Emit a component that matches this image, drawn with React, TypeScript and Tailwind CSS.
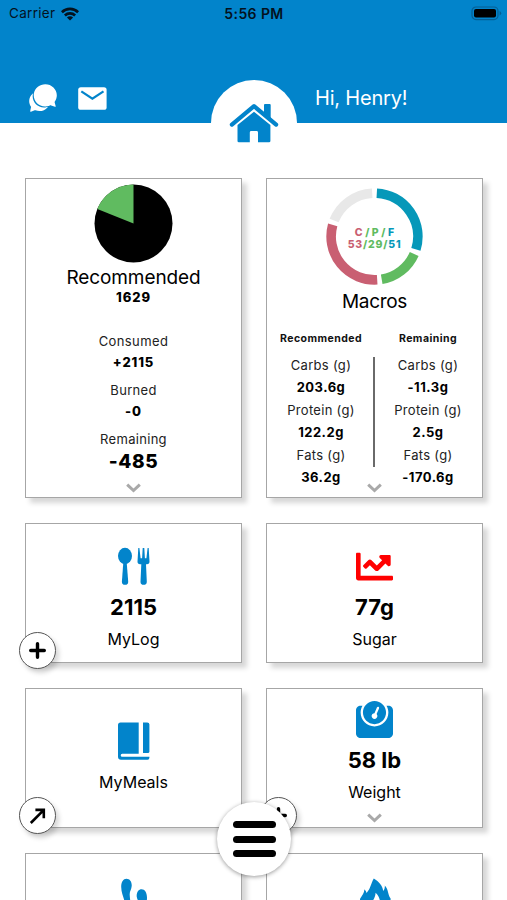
import type { ReactNode } from "react"
import { FaChartLine, FaWeight } from "react-icons/fa"
import { IoIosChatbubbles } from "react-icons/io"

const macroRows = [
  { label: "Carbs (g)", recommended: "203.6g", remaining: "-11.3g" },
  { label: "Protein (g)", recommended: "122.2g", remaining: "2.5g" },
  { label: "Fats (g)", recommended: "36.2g", remaining: "-170.6g" },
]

function WifiIcon() {
  return (
    <svg className="w-[18px] h-[14px]" viewBox="0 0 18 14" fill="none" stroke="#04121e" strokeWidth="2.7">
      <path d="M0.9 5.2A11.6 11.6 0 0 1 17.1 5.2" />
      <path d="M3.9 8.5A7.3 7.3 0 0 1 14.1 8.5" />
      <path d="M9 13.6L5.9 10.5A4.4 4.4 0 0 1 12.1 10.5Z" fill="#04121e" stroke="none" />
    </svg>
  )
}

function BatteryIcon() {
  return (
    <svg className="w-[31px] h-[15px]" viewBox="0 0 31 15">
      <rect x="1" y="1" width="26" height="12.6" rx="4" fill="none" stroke="#065f94" strokeWidth="1.2" />
      <rect x="3" y="3" width="22" height="8.6" rx="2" fill="#000" />
      <path d="M28.6 5v4.4q1.6-.8 1.6-2.2t-1.6-2.2z" fill="#065f94" />
    </svg>
  )
}

function MailIcon() {
  return (
    <svg className="w-[29px] h-[23px]" viewBox="0 0 29 23">
      <rect x="0.2" y="0.2" width="28.4" height="22.6" rx="2.6" fill="#fff" />
      <path d="M3.3 4.4L14.4 11.6L25.5 4.4" fill="none" stroke="#0284cb" strokeWidth="2.3" />
    </svg>
  )
}

function HouseIcon() {
  return (
    <svg className="w-[50px] h-[42px]" viewBox="0 0 50 42" fill="#0284cb">
      <path d="M35 11V3q0-1 1-1h4.7q1 0 1 1V17z" />
      <path
        d="M2.9 22.6L25 4.2L47.1 22.6"
        fill="none"
        stroke="#0284cb"
        strokeWidth="4.2"
        strokeLinecap="round"
        strokeLinejoin="round"
      />
      <path d="M8.5 23L25 9.8L41.4 23V38.9q0 1.4-1.4 1.4H29V30.4q0-1.4-1.4-1.4h-5.4q-1.4 0-1.4 1.4v9.9H9.9q-1.4 0-1.4-1.4z" />
    </svg>
  )
}

function CutleryIcon() {
  return (
    <svg className="w-[33px] h-[38px]" viewBox="0 0 33 38" fill="#0284cb">
      <ellipse cx="8" cy="9" rx="7" ry="8.3" />
      <path d="M6.3 15.5h3.4l1.5 19.2a3.1 3.1 0 0 1-6.3 0z" />
      <path d="M21.3 1h1.1l1.2 10.2h1.5L25.7 1h1.6l.6 10.2h1.5L30.6 1h1.1l.8 13.5q0 2.6-2.6 2.8h-.9l.8 17.4a3.1 3.1 0 0 1-6.3 0l.8-17.4h-1.2q-2.6-.2-2.6-2.8z" />
    </svg>
  )
}

function BookIcon() {
  return (
    <svg className="w-[33px] h-[38px]" viewBox="0 0 33 38" fill="#0284cb">
      <path d="M3.5.4h18.2v31.3H5.2q-1.5 0-1.5 1.5t1.5 1.5h27.2v1.1q0 1.9-1.9 1.9H4q-3 0-3-3V2.9Q1 .4 3.5.4z" />
      <path d="M26 .4h4.2q2.2 0 2.2 2.2v26.9q0 1.5-1.5 1.5H26z" />
    </svg>
  )
}

function FootstepsIcon() {
  return (
    <svg className="w-[33px] h-[40px]" viewBox="0 0 33 40" fill="#0284cb">
      <path d="M9.4.7C13 .7 15 4 14.7 8C14.5 11.5 12.6 13 12.7 16.5C12.8 19.5 13.2 20.5 13.2 23.5L7.8 25C7.2 20 4.3 15.5 4.2 9C4.1 4 6.3.7 9.4.7z" />
      <path d="M24.6 11.2C21.5 11.2 19.4 14.3 19.7 18.5C19.9 21.5 22 23 21.9 26.5L21.5 33L27 35C27.8 30 30 26 30 19.5C30 14.5 27.8 11.2 24.6 11.2z" />
    </svg>
  )
}

function FlameIcon() {
  return (
    <svg className="w-[34px] h-[40px]" viewBox="0 0 34 40" fill="#0284cb">
      <path d="M15.8.6C21 3.5 24.6 8 25.2 13Q27.2 11 26.8 7.4C30.5 11 29.6 16 32.6 20.5V30Q29 39 17 39.5Q5 39 2 30V21C3.4 18 6.4 15.5 6.3 11.2Q8.2 12.6 8.6 15C12.4 11 13 5.5 15.8.6z" />
      <path d="M17.6 14.8C21.5 18 21.6 22 23 26.5V37H12V26C14.5 23.2 17.2 20.5 17.6 14.8z" fill="#fff" />
    </svg>
  )
}

function ChevronIcon() {
  return (
    <svg className="w-[15px] h-[10px]" viewBox="0 0 15 10" fill="none" stroke="#a9a9a9" strokeWidth="3">
      <path d="M1.2 1.6L7.5 7.5L13.8 1.6" />
    </svg>
  )
}

function Donut() {
  return (
    <svg className="w-[97px] h-[97px]" viewBox="-48.5 -48.5 97 97" fill="none" strokeWidth="9.6">
      <path d="M2.3-43.3A43.4 43.4 0 0 1 41.4 12.9" stroke="#0698b9" />
      <path d="M39.7 17.5A43.4 43.4 0 0 1 7.2 42.8" stroke="#60bb60" />
      <path d="M2.7 43.3A43.4 43.4 0 0 1-41.8-11.6" stroke="#c95f72" />
      <path d="M-40.4-15.9A43.4 43.4 0 0 1-2.3-43.3" stroke="#e8e8e8" />
    </svg>
  )
}

function Card({ children, className = "" }: { children: ReactNode; className?: string }) {
  return (
    <div
      className={`relative flex flex-col items-center bg-white border border-[#a6a6a6] shadow-[5px_5px_5px_rgba(0,0,0,0.16)] ${className}`}
    >
      {children}
    </div>
  )
}

function CornerButton({ children }: { children: ReactNode }) {
  return (
    <button className="absolute -left-[7px] -bottom-[7px] w-[37px] h-[37px] flex items-center justify-center rounded-full bg-white border border-[#555] shadow-[3px_4px_5px_rgba(0,0,0,0.16)]">
      {children}
    </button>
  )
}

function PlusIcon() {
  return (
    <svg className="w-[18px] h-[18px]" viewBox="0 0 18 18" stroke="#000" strokeWidth="3.4" strokeLinecap="round">
      <path d="M8.5 1.7V15.3M1.7 8.5H15.3" />
    </svg>
  )
}

function MacroColumn({ title, values }: { title: string; values: string[] }) {
  return (
    <div className="w-[107px] flex flex-col items-center">
      <div className="h-[16px] leading-[16px] text-[10.5px] font-bold tracking-[0.45px] text-[#111]">{title}</div>
      <div className="mt-[7px]">
        {macroRows.map((row, i) => (
          <div key={row.label} className="h-[45px] text-center text-[13px]">
            <div className="leading-[22px] tracking-[0.3px] text-[#222]">{row.label}</div>
            <div className="leading-[22px] font-bold tracking-[0.5px]">{values[i]}</div>
          </div>
        ))}
      </div>
    </div>
  )
}

export default function App() {
  return (
    <div className="relative w-[507px] h-[900px] overflow-hidden bg-white text-black font-['Inter',sans-serif]">
      <header className="relative h-[123px] bg-[#0284cb]">
        <div className="flex items-center justify-between h-[27px] pl-[9px] pr-[5px] text-[13.5px] text-[#04121e]">
          <div className="flex items-center w-[150px] gap-[6px] tracking-[0.3px]">
            <span>Carrier</span>
            <WifiIcon />
          </div>
          <span className="mr-[3px] text-[14px] font-semibold tracking-[0.4px]">5:56 PM</span>
          <div className="flex justify-end w-[150px]">
            <BatteryIcon />
          </div>
        </div>
        <div className="flex items-center h-[38px] mt-[14px] pt-[38px] pl-[26px] box-content">
          <IoIosChatbubbles className="w-[34px] h-[34px] text-white" />
          <div className="ml-[18px]">
            <MailIcon />
          </div>
          <span className="ml-[208px] text-[20px] tracking-[-0.2px] text-white whitespace-nowrap">Hi, Henry!</span>
        </div>
        <div className="absolute left-[211px] top-[80px] w-[86px] h-[86px] rounded-full bg-white flex justify-center pt-[22px]">
          <HouseIcon />
        </div>
      </header>

      <main className="grid grid-cols-[217px_217px] gap-x-[24px] gap-y-[25px] pt-[55px] pl-[25px]">
        <Card className="h-[320px]">
          <svg className="mt-[5px] w-[79px] h-[79px] shrink-0" viewBox="-39.5 -39.5 79 79">
            <circle r="39" fill="#000" />
            <path d="M0 0V-39A39 39 0 0 0-36.2-14.6Z" fill="#60bb60" />
          </svg>
          <div className="mt-[3px] text-[19px] leading-[24px] tracking-[-0.1px]">Recommended</div>
          <div className="text-[13px] leading-[15px] font-extrabold tracking-[0.9px]">1629</div>
          <div className="mt-[25px] text-[13px] leading-[22px] tracking-[0.4px] text-[#222]">Consumed</div>
          <div className="text-[13px] leading-[20px] font-extrabold tracking-[0.9px]">+2115</div>
          <div className="mt-[7px] text-[13px] leading-[22px] tracking-[0.3px] text-[#222]">Burned</div>
          <div className="text-[13px] leading-[20px] font-extrabold tracking-[0.9px]">-0</div>
          <div className="mt-[7px] text-[13px] leading-[22px] tracking-[0.3px] text-[#222]">Remaining</div>
          <div className="text-[19px] leading-[24px] font-extrabold tracking-[0.6px]">-485</div>
          <div className="absolute bottom-[4px]">
            <ChevronIcon />
          </div>
        </Card>

        <Card className="h-[320px]">
          <div className="relative mt-[9px]">
            <Donut />
            <div className="absolute inset-0 pt-[4px] flex flex-col items-center justify-center text-[10.5px] leading-[12px] font-extrabold text-[#60bb60]">
              <div className="tracking-[0.1px]">
                <span className="text-[#c95f72]">C</span> / P / <span className="text-[#0698b9]">F</span>
              </div>
              <div className="tracking-[0.8px]">
                <span className="text-[#c95f72]">53</span>/29/<span className="text-[#0698b9]">51</span>
              </div>
            </div>
          </div>
          <div className="mt-[5px] text-[19px] leading-[24px] tracking-[-0.3px]">Macros</div>
          <div className="flex mt-[17px]">
            <MacroColumn title="Recommended" values={macroRows.map((r) => r.recommended)} />
            <MacroColumn title="Remaining" values={macroRows.map((r) => r.remaining)} />
          </div>
          <div className="absolute left-[106px] top-[178px] w-[2px] h-[110px] bg-[#6a6a6a]" />
          <div className="absolute bottom-[4px]">
            <ChevronIcon />
          </div>
        </Card>

        <Card className="h-[140px]">
          <div className="mt-[23px]">
            <CutleryIcon />
          </div>
          <div className="mt-[9px] text-[22px] leading-[26px] font-bold">2115</div>
          <div className="mt-[7px] text-[16px] leading-[24px]">MyLog</div>
          <CornerButton>
            <PlusIcon />
          </CornerButton>
        </Card>

        <Card className="h-[140px]">
          <FaChartLine className="mt-[24px] w-[37px] h-[37px] text-[#ff0000]" />
          <div className="mt-[9px] text-[22px] leading-[26px] font-bold">77g</div>
          <div className="mt-[7px] text-[16px] leading-[24px]">Sugar</div>
        </Card>

        <Card className="h-[140px]">
          <div className="mt-[33px]">
            <BookIcon />
          </div>
          <div className="mt-[10px] text-[16px] leading-[24px]">MyMeals</div>
          <CornerButton>
            <svg className="w-[18px] h-[18px]" viewBox="0 0 18 18" fill="none" stroke="#000" strokeWidth="2.6">
              <path d="M1.8 16L14.6 3.2M6.4 2.9H14.8V11.3" />
            </svg>
          </CornerButton>
        </Card>

        <Card className="h-[140px]">
          <FaWeight className="mt-[12px] w-[37px] h-[37px] text-[#0284cb]" />
          <div className="mt-[9px] text-[22px] leading-[26px] font-bold">58 lb</div>
          <div className="mt-[7px] text-[16px] leading-[24px]">Weight</div>
          <div className="absolute bottom-[4px]">
            <ChevronIcon />
          </div>
          <CornerButton>
            <PlusIcon />
          </CornerButton>
        </Card>

        <Card className="h-[140px]">
          <div className="mt-[24px]">
            <FootstepsIcon />
          </div>
        </Card>

        <Card className="h-[140px]">
          <div className="mt-[24px]">
            <FlameIcon />
          </div>
        </Card>
      </main>

      <button className="absolute left-[217px] top-[802px] w-[74px] h-[74px] flex flex-col items-center justify-center gap-[7.5px] rounded-full bg-white shadow-[0_1px_4px_rgba(0,0,0,0.4)]">
        <span className="w-[43px] h-[7px] rounded-full bg-black" />
        <span className="w-[43px] h-[7px] rounded-full bg-black" />
        <span className="w-[43px] h-[7px] rounded-full bg-black" />
      </button>
    </div>
  )
}
